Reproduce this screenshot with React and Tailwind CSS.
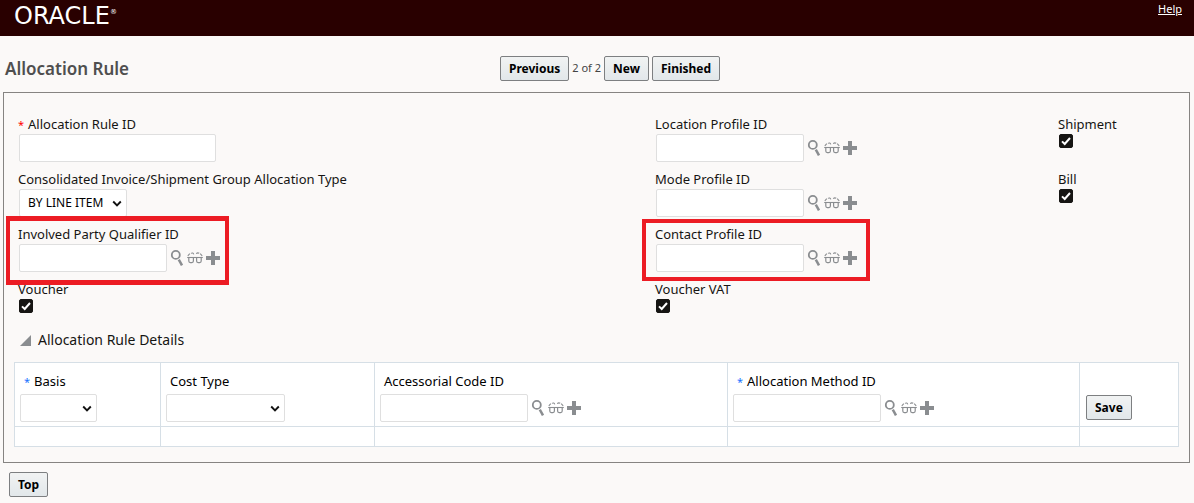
import React from 'react';

const SearchIcon = () => (
    <svg width="14" height="16" viewBox="0 0 14 16" fill="none" stroke="#8a8d90">
        <circle cx="5.8" cy="4.9" r="4" strokeWidth="1.8" />
        <path d="M8.8 9.6L12 15.4" strokeWidth="2.5" />
    </svg>
);

const GlassesIcon = () => (
    <svg width="16" height="16" viewBox="0 0 16 16" fill="none" stroke="#8a8d90" strokeWidth="1.2">
        <path d="M0.2 7.5H15.8" strokeWidth="1.1" />
        <path d="M1.8 7.5v3.6c0 0.9 0.6 1.5 1.5 1.5h1.6c0.9 0 1.5-0.6 1.5-1.5V7.5" />
        <path d="M9.6 7.5v3.6c0 0.9 0.6 1.5 1.5 1.5h1.6c0.9 0 1.5-0.6 1.5-1.5V7.5" />
        <path d="M0.8 5.8L2.8 3.6M4 3.4C5.2 2.6 6.2 3 6.8 4.4M9.2 3.6C10.2 2.7 11.4 2.7 12.2 3.3M13.2 3.6L15.2 5.8" strokeWidth="1.1" />
    </svg>
);

const PlusIcon = () => (
    <svg width="14" height="16" viewBox="0 0 14 16" fill="#8a8d90">
        <path d="M5 1h4v5h5v4H9v5H5v-5H0V6h5z" />
    </svg>
);

const Label = ({ id, children, required }) => (
    <label htmlFor={id} className="block text-[13px] leading-5 whitespace-nowrap">
        {required && <span className={`mr-1 text-[11px] leading-none ${required}`}>*</span>}
        {children}
    </label>
);

const TextBox = ({ id, className = 'w-[148px]' }) => (
    <input id={id} type="text" className={`block h-7 rounded-xs border border-[#dfdfdf] bg-white px-2 text-[12px] ${className}`} />
);

const Lookup = ({ id }) => (
    <div className="flex items-center gap-[3px]">
        <TextBox id={id} />
        <button type="button" aria-label="Find"><SearchIcon /></button>
        <button type="button" aria-label="View"><GlassesIcon /></button>
        <button type="button" aria-label="New"><PlusIcon /></button>
    </div>
);

const Select = ({ id, options, className }) => (
    <div className={`relative h-7 ${className}`}>
        <select id={id} className="block h-full w-full appearance-none rounded-xs border border-[#dfdfdf] bg-white pl-2 text-[12px] text-black">
            {options.map((option) => <option key={option}>{option}</option>)}
        </select>
        <svg width="10" height="8" viewBox="0 0 10 8" className="pointer-events-none absolute top-[11px] right-[5px]" fill="none" stroke="#111" strokeWidth="1.9">
            <path d="M1.2 1.5L5 5.3L8.8 1.5" />
        </svg>
    </div>
);

const Field = ({ id, label, required, mark, className = '', children }) => (
    <div className={`relative h-12 ${className}`}>
        <Label id={id} required={required}>{label}</Label>
        <div className="pl-px">{children}</div>
        {mark && <div className={`pointer-events-none absolute z-10 border-[#ec1c24] ${mark}`} />}
    </div>
);

const CheckField = ({ id, label, className }) => (
    <Field id={id} label={label} className={className}>
        <div className="relative h-[14px] w-[14px]">
            <input id={id} type="checkbox" defaultChecked className="block h-[14px] w-[14px] appearance-none rounded-xs border border-[#161513] bg-white checked:bg-[#161513]" />
            <svg width="14" height="14" viewBox="0 0 14 14" className="pointer-events-none absolute top-0 left-0" fill="none" stroke="#fff" strokeWidth="2">
                <path d="M3 7.4L5.7 10L11 4" />
            </svg>
        </div>
    </Field>
);

const Button = ({ children }) => (
    <button type="button" className="h-[25px] rounded-xs border border-[#7d7f81] bg-linear-to-b from-[#f1f3f3] to-[#e2e7ea] px-2 text-[12px] font-bold text-black">
        {children}
    </button>
);

const Cell = ({ id, label, required, children }) => (
    <td className="border border-[#d6dfe6] px-[5px] pt-2 pb-1 align-top">
        <div className="pb-[3px] pl-1">
            <Label id={id} required={required}>{label}</Label>
        </div>
        {children}
    </td>
);

const App = () => {
    return (
        <div className="min-h-screen bg-[#fbf9f8] font-['Noto_Sans',sans-serif] text-[#161513]">
            <header className="flex h-9 items-start justify-between bg-[#290000] pr-3 pl-[14px] text-white">
                <div className="flex items-start pt-1 font-['DejaVu_Sans',sans-serif] text-[24px] leading-6">
                    ORACLE<span className="text-[7px] leading-4">®</span>
                </div>
                <a href="#help" className="text-[11px] leading-[18px] underline">Help</a>
            </header>

            <div className="grid grid-cols-[495fr_694fr] items-center pt-5 pb-[11px] pl-[5px]">
                <h1 className="text-[17px] leading-[25px] font-semibold text-[#4f4f4f]">Allocation Rule</h1>
                <div className="flex items-center gap-[3px]">
                    <Button>Previous</Button>
                    <span className="text-[11px] text-[#444]">2 of 2</span>
                    <Button>New</Button>
                    <Button>Finished</Button>
                </div>
            </div>

            <main className="mr-1 ml-[3px] border border-[#868482] pt-[21px] pb-[15px]">
                <div className="grid grid-cols-[637fr_403fr_131fr] gap-y-[7px] pl-[14px]">
                    <Field id="ruleId" label="Allocation Rule ID" required="text-[#f00]">
                        <TextBox id="ruleId" className="w-[197px]" />
                    </Field>
                    <Field id="location" label="Location Profile ID"><Lookup id="location" /></Field>
                    <CheckField id="shipment" label="Shipment" />

                    <Field id="allocType" label="Consolidated Invoice/Shipment Group Allocation Type">
                        <Select id="allocType" options={['BY LINE ITEM']} className="w-[108px]" />
                    </Field>
                    <Field id="mode" label="Mode Profile ID"><Lookup id="mode" /></Field>
                    <CheckField id="bill" label="Bill" />

                    <Field id="party" label="Involved Party Qualifier ID" mark="-top-2 -left-3 h-[69px] w-[223px] border-x-4 border-y-5">
                        <Lookup id="party" />
                    </Field>
                    <Field id="contact" label="Contact Profile ID" className="col-span-2" mark="-top-[5px] -left-[13px] h-[62px] w-[228px] border-4">
                        <Lookup id="contact" />
                    </Field>

                    <CheckField id="voucher" label="Voucher" />
                    <CheckField id="voucherVat" label="Voucher VAT" className="col-span-2" />
                </div>

                <h2 className="mt-[3px] flex items-center gap-[7px] pb-3 pl-4 text-[14px] leading-5">
                    <svg width="11" height="11" viewBox="0 0 11 11" fill="#8a8d90"><path d="M11 0v11H0z" /></svg>
                    Allocation Rule Details
                </h2>

                <div className="px-[10px]">
                    <table className="w-full table-fixed border-collapse bg-white text-black">
                        <colgroup>
                            <col className="w-[146px]" />
                            <col className="w-[214px]" />
                            <col className="w-[353px]" />
                            <col className="w-[352px]" />
                            <col />
                        </colgroup>
                        <tbody>
                            <tr>
                                <Cell id="basis" label="Basis" required="text-[#1a73ff]">
                                    <Select id="basis" options={['']} className="w-[77px]" />
                                </Cell>
                                <Cell id="costType" label="Cost Type">
                                    <Select id="costType" options={['']} className="w-[119px]" />
                                </Cell>
                                <Cell id="accessorial" label="Accessorial Code ID"><Lookup id="accessorial" /></Cell>
                                <Cell id="method" label="Allocation Method ID" required="text-[#1a73ff]"><Lookup id="method" /></Cell>
                                <td className="border border-[#d6dfe6] px-[6px] pb-[6px] align-bottom leading-none">
                                    <Button>Save</Button>
                                </td>
                            </tr>
                            <tr className="h-5">
                                <td className="border border-[#d6dfe6]" />
                                <td className="border border-[#d6dfe6]" />
                                <td className="border border-[#d6dfe6]" />
                                <td className="border border-[#d6dfe6]" />
                                <td className="border border-[#d6dfe6]" />
                            </tr>
                        </tbody>
                    </table>
                </div>
            </main>

            <footer className="flex pt-[9px] pb-1 pl-[9px]">
                <Button>Top</Button>
            </footer>
        </div>
    );
};

export default App;
